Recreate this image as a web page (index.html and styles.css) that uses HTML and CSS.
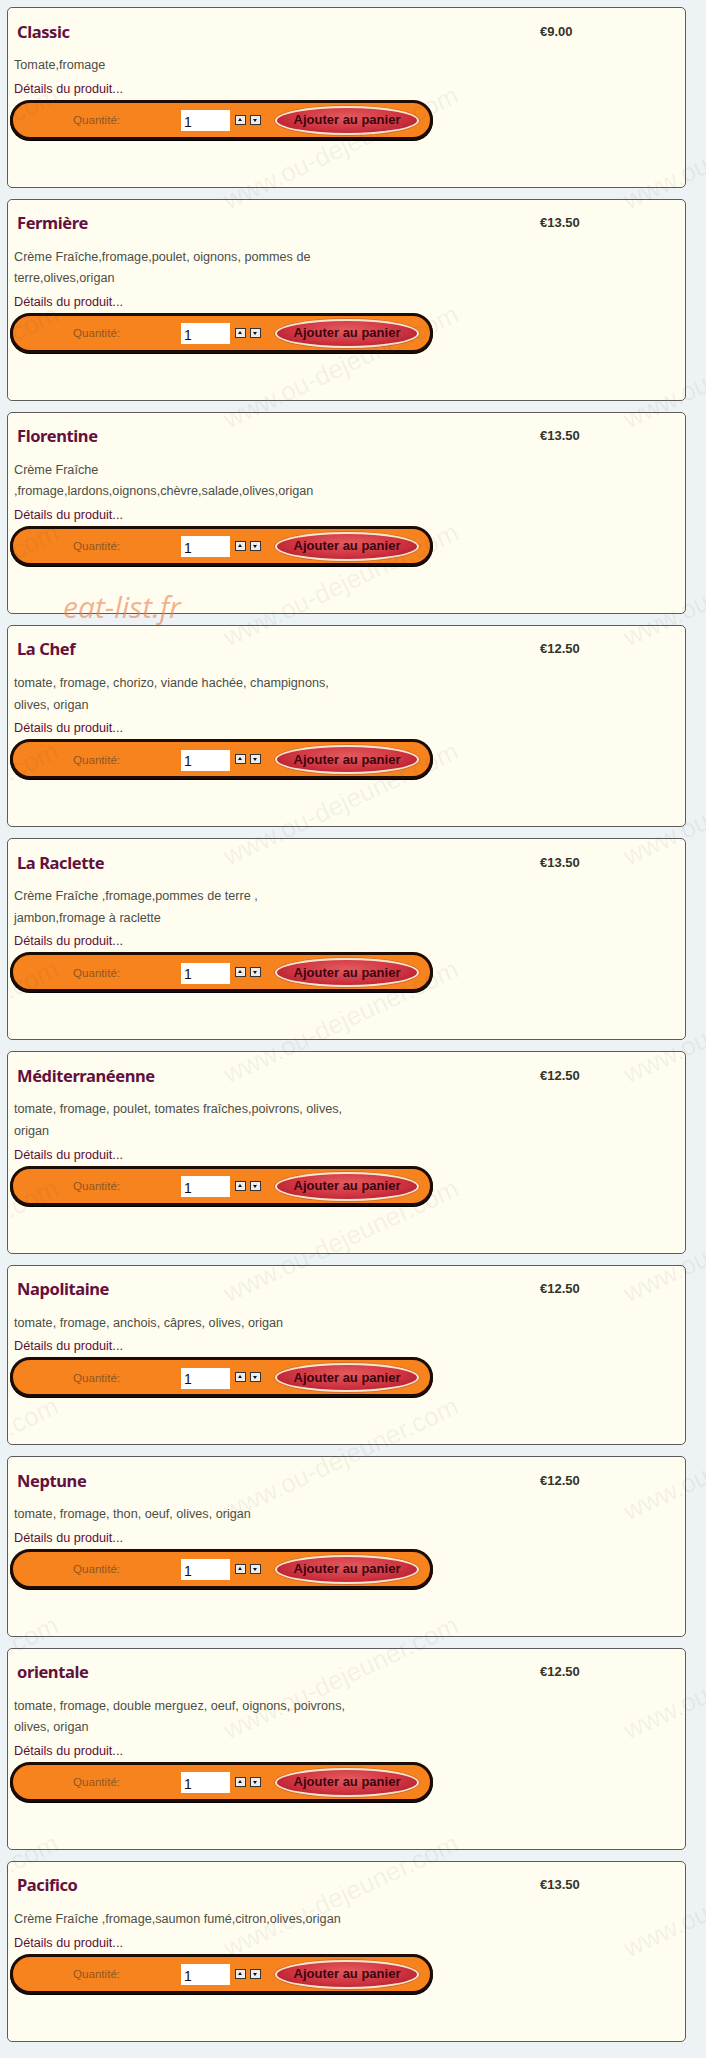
FILE: index.html
```html
<!DOCTYPE html>
<html lang="fr">
  <head>
    <meta charset="UTF-8" />
    <meta name="viewport" content="width=device-width, initial-scale=1.0" />
    <title>Pizzas</title>
    <link rel="stylesheet" href="styles.css">
  </head>
  <body>
    <div class="menu">
      <!-- Classic -->
      <div class="product">
        <div class="product-head">
          <h2 class="product-name">Classic</h2>
          <span class="product-price">€9.00</span>
        </div>
        <p class="product-desc">Tomate,fromage</p>
        <a class="product-link" href="#">Détails du produit...</a>
        <form class="order-bar">
          <label class="qty-label">Quantité:</label>
          <input class="qty" type="text" value="1">
          <span class="spin"><button type="button" class="spin-up"></button><button type="button" class="spin-down"></button></span>
          <button type="button" class="add-cart">Ajouter au panier</button>
        </form>
      </div>

      <!-- Fermière -->
      <div class="product">
        <div class="product-head">
          <h2 class="product-name">Fermière</h2>
          <span class="product-price">€13.50</span>
        </div>
        <p class="product-desc">Crème Fraîche,fromage,poulet, oignons, pommes de terre,olives,origan</p>
        <a class="product-link" href="#">Détails du produit...</a>
        <form class="order-bar">
          <label class="qty-label">Quantité:</label>
          <input class="qty" type="text" value="1">
          <span class="spin"><button type="button" class="spin-up"></button><button type="button" class="spin-down"></button></span>
          <button type="button" class="add-cart">Ajouter au panier</button>
        </form>
      </div>

      <!-- Florentine -->
      <div class="product">
        <div class="product-head">
          <h2 class="product-name">Florentine</h2>
          <span class="product-price">€13.50</span>
        </div>
        <p class="product-desc">Crème Fraîche ,fromage,lardons,oignons,chèvre,salade,olives,origan</p>
        <a class="product-link" href="#">Détails du produit...</a>
        <form class="order-bar">
          <label class="qty-label">Quantité:</label>
          <input class="qty" type="text" value="1">
          <span class="spin"><button type="button" class="spin-up"></button><button type="button" class="spin-down"></button></span>
          <button type="button" class="add-cart">Ajouter au panier</button>
        </form>
      </div>

      <!-- La Chef -->
      <div class="product">
        <div class="product-head">
          <h2 class="product-name">La Chef</h2>
          <span class="product-price">€12.50</span>
        </div>
        <p class="product-desc">tomate, fromage, chorizo, viande hachée, champignons, olives, origan</p>
        <a class="product-link" href="#">Détails du produit...</a>
        <form class="order-bar">
          <label class="qty-label">Quantité:</label>
          <input class="qty" type="text" value="1">
          <span class="spin"><button type="button" class="spin-up"></button><button type="button" class="spin-down"></button></span>
          <button type="button" class="add-cart">Ajouter au panier</button>
        </form>
      </div>

      <!-- La Raclette -->
      <div class="product">
        <div class="product-head">
          <h2 class="product-name">La Raclette</h2>
          <span class="product-price">€13.50</span>
        </div>
        <p class="product-desc">Crème Fraîche ,fromage,pommes de terre , jambon,fromage à raclette</p>
        <a class="product-link" href="#">Détails du produit...</a>
        <form class="order-bar">
          <label class="qty-label">Quantité:</label>
          <input class="qty" type="text" value="1">
          <span class="spin"><button type="button" class="spin-up"></button><button type="button" class="spin-down"></button></span>
          <button type="button" class="add-cart">Ajouter au panier</button>
        </form>
      </div>

      <!-- Méditerranéenne -->
      <div class="product">
        <div class="product-head">
          <h2 class="product-name">Méditerranéenne</h2>
          <span class="product-price">€12.50</span>
        </div>
        <p class="product-desc">tomate, fromage, poulet, tomates fraîches,poivrons, olives, origan</p>
        <a class="product-link" href="#">Détails du produit...</a>
        <form class="order-bar">
          <label class="qty-label">Quantité:</label>
          <input class="qty" type="text" value="1">
          <span class="spin"><button type="button" class="spin-up"></button><button type="button" class="spin-down"></button></span>
          <button type="button" class="add-cart">Ajouter au panier</button>
        </form>
      </div>

      <!-- Napolitaine -->
      <div class="product">
        <div class="product-head">
          <h2 class="product-name">Napolitaine</h2>
          <span class="product-price">€12.50</span>
        </div>
        <p class="product-desc">tomate, fromage, anchois, câpres, olives, origan</p>
        <a class="product-link" href="#">Détails du produit...</a>
        <form class="order-bar">
          <label class="qty-label">Quantité:</label>
          <input class="qty" type="text" value="1">
          <span class="spin"><button type="button" class="spin-up"></button><button type="button" class="spin-down"></button></span>
          <button type="button" class="add-cart">Ajouter au panier</button>
        </form>
      </div>

      <!-- Neptune -->
      <div class="product">
        <div class="product-head">
          <h2 class="product-name">Neptune</h2>
          <span class="product-price">€12.50</span>
        </div>
        <p class="product-desc">tomate, fromage, thon, oeuf, olives, origan</p>
        <a class="product-link" href="#">Détails du produit...</a>
        <form class="order-bar">
          <label class="qty-label">Quantité:</label>
          <input class="qty" type="text" value="1">
          <span class="spin"><button type="button" class="spin-up"></button><button type="button" class="spin-down"></button></span>
          <button type="button" class="add-cart">Ajouter au panier</button>
        </form>
      </div>

      <!-- orientale -->
      <div class="product">
        <div class="product-head">
          <h2 class="product-name">orientale</h2>
          <span class="product-price">€12.50</span>
        </div>
        <p class="product-desc">tomate, fromage, double merguez, oeuf, oignons, poivrons, olives, origan</p>
        <a class="product-link" href="#">Détails du produit...</a>
        <form class="order-bar">
          <label class="qty-label">Quantité:</label>
          <input class="qty" type="text" value="1">
          <span class="spin"><button type="button" class="spin-up"></button><button type="button" class="spin-down"></button></span>
          <button type="button" class="add-cart">Ajouter au panier</button>
        </form>
      </div>

      <!-- Pacifico -->
      <div class="product">
        <div class="product-head">
          <h2 class="product-name">Pacifico</h2>
          <span class="product-price">€13.50</span>
        </div>
        <p class="product-desc">Crème Fraîche ,fromage,saumon fumé,citron,olives,origan</p>
        <a class="product-link" href="#">Détails du produit...</a>
        <form class="order-bar">
          <label class="qty-label">Quantité:</label>
          <input class="qty" type="text" value="1">
          <span class="spin"><button type="button" class="spin-up"></button><button type="button" class="spin-down"></button></span>
          <button type="button" class="add-cart">Ajouter au panier</button>
        </form>
      </div>
    </div>

    <!-- filigranes -->
    <div class="watermarks" id="watermarks"></div>
    <div class="site-mark">eat-list.fr</div>

    <script>
      // grille du filigrane "www.ou-dejeuner.com"
      const stepX = 400;
      const stepY = 218.5;
      const layer = document.getElementById("watermarks");

      for (let row = 0; row < 10; row++) {
        for (let col = -1; col <= 1; col++) {
          const mark = document.createElement("span");
          mark.className = "wm";
          mark.textContent = "www.ou-dejeuner.com";
          mark.style.left = `${341 + col * stepX}px`;
          mark.style.top = `${148 + row * stepY}px`;
          layer.appendChild(mark);
        }
      }
    </script>
  </body>
</html>
```

FILE: styles.css
```css
/* page */
body {
  margin: 7px 0 0 7px;
  background: #edf2f4;
  font-family: "Liberation Sans", Arial, sans-serif;
  color: #444;
  position: relative;
}

.menu {
  width: 679px;
}

/* carte produit */
.product {
  background: #fffdf0;
  border: 1px solid #5c5c5c;
  border-radius: 5px;
  padding: 10px 6px 47px 6px;
  margin-bottom: 11px;
}

.product-head {
  display: flex;
  align-items: center;
  height: 26px;
}

.product-name {
  flex: 1;
  margin: 0;
  padding-left: 3px;
  font-family: "Noto Sans", "Open Sans", sans-serif;
  font-size: 16.5px;
  font-weight: 700;
  letter-spacing: -0.4px;
  color: #63103c;
}

.product-price {
  width: 139px;
  font-size: 13px;
  font-weight: bold;
  color: #33332a;
}

.product-desc {
  width: 335px;
  margin: 11px 0 0 0;
  font-size: 12.65px;
  line-height: 21.6px;
  color: #4d4d46;
}

.product-link {
  display: block;
  margin-top: 1px;
  font-size: 12.65px;
  line-height: 22px;
  color: #5e0f34;
  text-decoration: none;
}

/* barre de commande */
.order-bar {
  display: flex;
  align-items: center;
  box-sizing: border-box;
  width: 423px;
  height: 40px;
  margin: 0 0 0 -4px;
  padding: 0 0 0 60px;
  background: #f6831e;
  border: 3px solid #1c0c04;
  border-radius: 20px;
  box-shadow: 0 1px 0 #000;
}

.qty-label {
  width: 108px;
  font-size: 11.6px;
  color: #925522;
}

.qty {
  box-sizing: border-box;
  width: 49px;
  height: 21px;
  margin: 2px 0 0 0;
  padding: 2px 3px 0;
  border: none;
  background: #fff;
  font-family: "Liberation Sans", Arial, sans-serif;
  font-size: 14px;
  color: #111;
}

.spin {
  display: flex;
  gap: 4px;
  margin-left: 5px;
}

.spin button {
  position: relative;
  width: 11px;
  height: 10px;
  padding: 0;
  border: 1px solid #333;
  background: #ececec;
}

.spin button::after {
  content: "";
  position: absolute;
  left: 2px;
  border-left: 2.5px solid transparent;
  border-right: 2.5px solid transparent;
}

.spin-up::after {
  top: 2px;
  border-bottom: 3px solid #111;
}

.spin-down::after {
  top: 3px;
  border-top: 3px solid #111;
}

.add-cart {
  box-sizing: border-box;
  width: 144px;
  height: 29px;
  margin: 1px 0 0 14px;
  padding: 0 0 1px;
  border: 2.5px solid #f6e6cf;
  border-radius: 50%;
  background: radial-gradient(ellipse at 50% 35%, #e35a5e 0%, #cf3440 55%, #a5152a 100%);
  box-shadow: 0 0 0 1px rgba(190, 90, 50, 0.6);
  font-family: "Liberation Sans", Arial, sans-serif;
  font-size: 13px;
  font-weight: bold;
  color: #3b0610;
}

/* filigranes */
.watermarks {
  position: absolute;
  top: -7px;
  left: -7px;
  width: 706px;
  height: 2058px;
  overflow: hidden;
  pointer-events: none;
}

.wm {
  position: absolute;
  transform: translate(-50%, -50%) rotate(-25deg);
  font-family: "Liberation Sans", Arial, sans-serif;
  font-size: 26px;
  white-space: nowrap;
  color: rgba(70, 70, 60, 0.075);
}

.site-mark {
  position: absolute;
  top: 579px;
  left: 56px;
  font-family: "Open Sans", sans-serif;
  font-style: italic;
  font-size: 30px;
  color: rgba(236, 128, 78, 0.62);
  pointer-events: none;
}
```
